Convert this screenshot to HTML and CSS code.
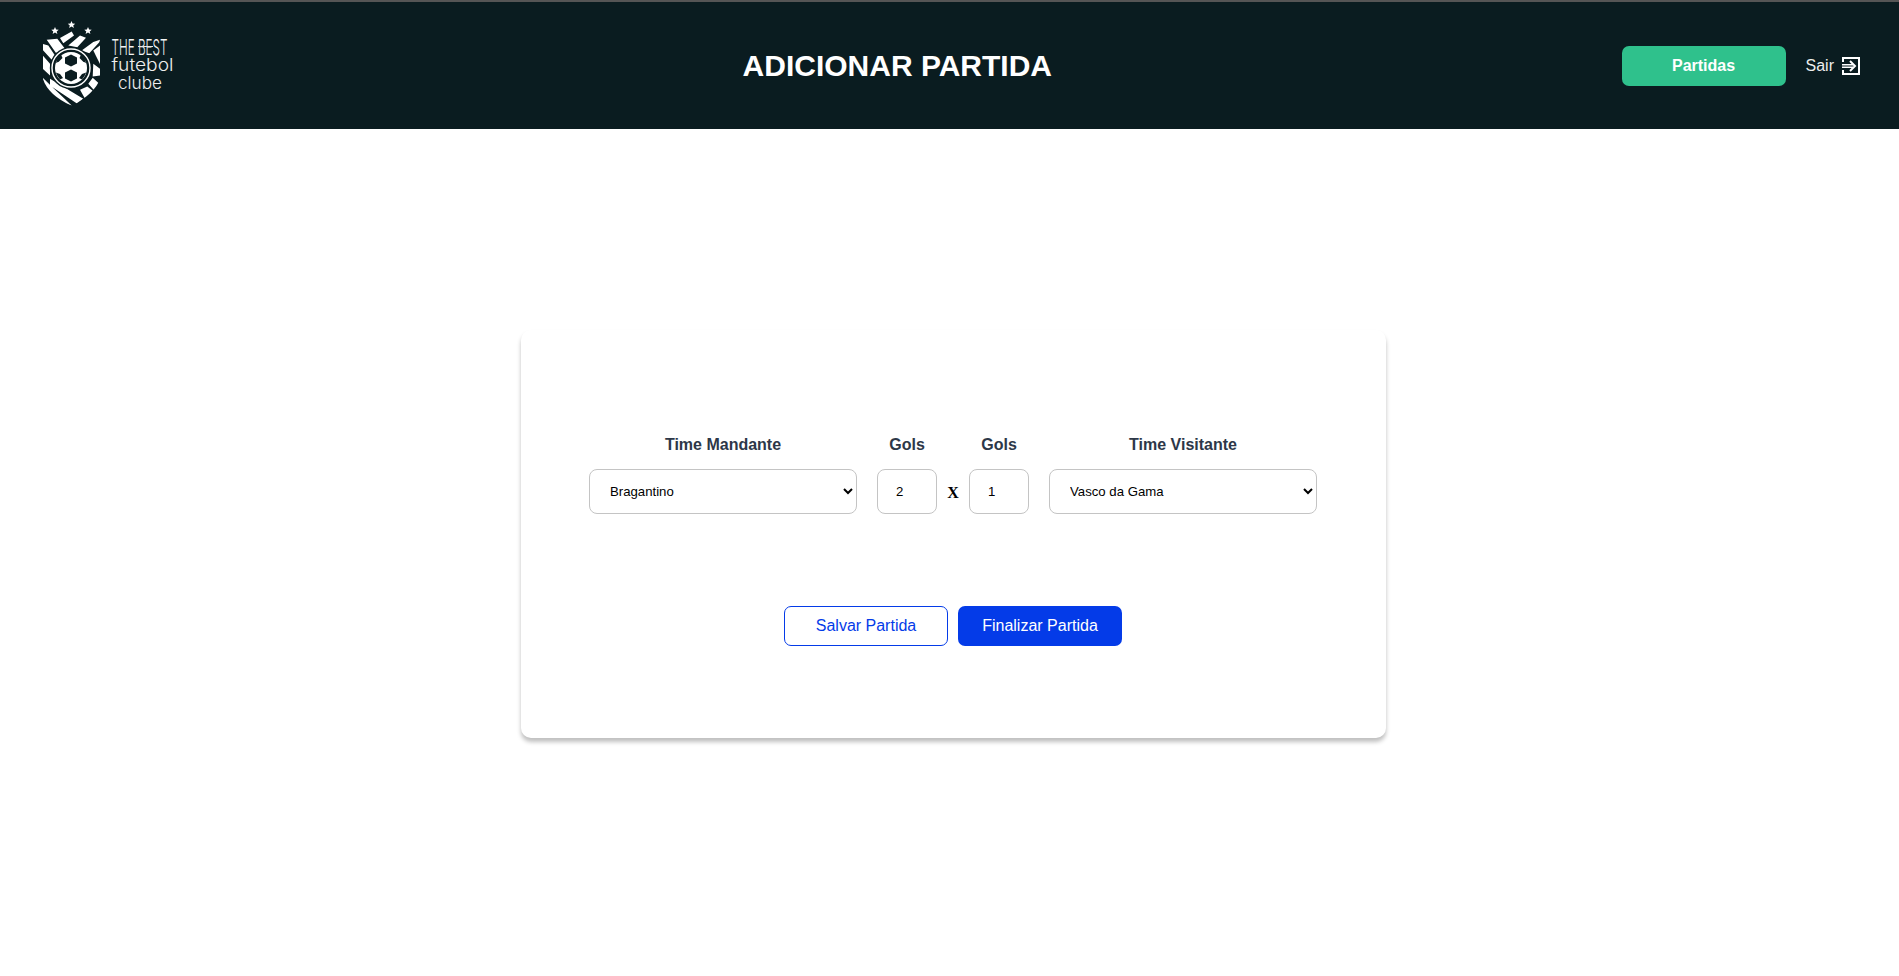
FILE: index.html
```html
<!DOCTYPE html>
<html lang="pt-BR">
<head>
<meta charset="utf-8">
<title>Adicionar Partida</title>
<link rel="stylesheet" href="styles.css">
</head>
<body>
<header class="topbar">
  <svg class="logo" viewBox="0 0 140 90" width="140" height="90" aria-label="The Best futebol clube">
    <defs>
      <clipPath id="shield"><path d="M0 16 L28 8 L57 16 L57 56 Q52 70 29 83 Q5 72 0 56 Z"/></clipPath>
    </defs>
    <g fill="#fff">
      <path d="M12 4l1.1 2.4 2.6.3-2 1.7.7 2.6-2.4-1.4-2.4 1.4.7-2.6-2-1.7 2.6-.3z"/>
      <path d="M28.5-2l1.1 2.4 2.6.3-2 1.7.7 2.6-2.4-1.4-2.4 1.4.7-2.6-2-1.7 2.6-.3z"/>
      <path d="M45 4l1.1 2.4 2.6.3-2 1.7.7 2.6-2.4-1.4-2.4 1.4.7-2.6-2-1.7 2.6-.3z"/>
      <path d="M17 15 L28.7 8.5 L31 12.5 L20.3 20.2 Z M25.3 22.5 L37 12.5 L43 14.8 L34.3 24.2 Z M38.7 27.5 L50.3 19 L57 16.8 L56.3 19.2 L46.3 30.2 Z"/>
      <g clip-path="url(#shield)">
        <path d="M50.3 27.5 L57 22.5 L57 41 Z"/>
        <path d="M3.7 16.8 L14.3 15.8 L22 25.8 L13 30 Z M-0.3 20.8 L5.3 22.5 L12 32.5 L8.7 36.8 L-0.3 27 Z M-0.3 32.5 L7 40.8 L7 52.5 L-0.3 45.8 Z"/>
        <path d="M-0.3 54.8 L8.7 63.5 L28.7 82.5 L20.3 80 L0 68 Z M7 55.8 L40.3 75.8 L34.3 80.8 L7 62.5 Z"/>
        <path d="M37 66.8 L44.3 63.5 L50.3 68.2 L42 75.8 Z M45.3 60.8 L49.7 54.8 L56.3 60.8 L51.3 67.5 Z M50.3 40.8 L57 45.8 L57 52.5 L49.7 53.5 Z"/>
      </g>
    </g>
    <circle cx="28" cy="45" r="21.2" fill="#0a1c20"/>
    <circle cx="28" cy="45" r="19" fill="none" stroke="#fff" stroke-width="1.4"/>
    <circle cx="28" cy="45" r="16" fill="#fff"/>
    <g fill="#0a1c20">
      <path d="M28 31.5 L34 34.5 L34 40.5 L28 43.5 L22 40.5 L22 34.5 Z"/>
      <path d="M28 46.5 L34 49.5 L34 55.5 L28 58.5 L22 55.5 L22 49.5 Z"/>
      <path d="M13 40 Q14 34 18 31.5 L19.5 35 L16 38.5 Z"/>
      <path d="M43 40 Q42 34 38 31.5 L36.5 35 L40 38.5 Z"/>
      <path d="M17 56.5 Q14 53 12.8 49.5 L17 51 L20 55 Z"/>
      <path d="M39 56.5 Q42 53 43.2 49.5 L39 51 L36 55 Z"/>
    </g>
    <text class="logo-best" x="68.5" y="31.5" textLength="56" lengthAdjust="spacingAndGlyphs">THE BEST</text>
    <path class="logo-rule" d="M95 23.5 H110"/>
    <text class="logo-word" x="68.5" y="48" textLength="62" lengthAdjust="spacingAndGlyphs">futebol</text>
    <text class="logo-word" x="75" y="66" textLength="44" lengthAdjust="spacingAndGlyphs">clube</text>
  </svg>
  <h1 class="title">ADICIONAR PARTIDA</h1>
  <nav class="actions">
    <a class="btn btn-green" href="#">Partidas</a>
    <a class="logout" href="#">Sair
      <svg class="logout-icon" viewBox="0 0 18 18" width="18" height="18">
        <path d="M1 5 V1 H17 V17 H1 V13" fill="none" stroke="#fff" stroke-width="2"/>
        <path d="M0 7.7 H11 M0 10.3 H11" fill="none" stroke="#fff" stroke-width="1.6"/>
        <path d="M8 4 L13 9 L8 14" fill="none" stroke="#fff" stroke-width="2"/>
      </svg>
    </a>
  </nav>
</header>
<main class="content">
  <form class="card">
    <div class="score-row">
      <label class="field">
        <span class="field-label">Time Mandante</span>
        <select class="control team"><option>Bragantino</option><option>Vasco da Gama</option></select>
      </label>
      <label class="field">
        <span class="field-label">Gols</span>
        <input class="control goals" type="number" value="2">
      </label>
      <span class="versus">X</span>
      <label class="field">
        <span class="field-label">Gols</span>
        <input class="control goals" type="number" value="1">
      </label>
      <label class="field">
        <span class="field-label">Time Visitante</span>
        <select class="control team"><option>Vasco da Gama</option><option>Bragantino</option></select>
      </label>
    </div>
    <div class="form-actions">
      <button class="btn btn-outline" type="button">Salvar Partida</button>
      <button class="btn btn-blue" type="button">Finalizar Partida</button>
    </div>
  </form>
</main>
</body>
</html>
```
FILE: styles.css
```css
* { box-sizing: border-box; }
html, body { margin: 0; height: 100%; }
body { background: #fff; font-family: "Liberation Sans", Arial, sans-serif; overflow: hidden; }

.topbar {
  height: 129px;
  background: #0a1c20;
  border-top: 2px solid #555;
  display: flex;
  align-items: center;
  justify-content: space-between;
  padding: 0 39px 0 43px;
  color: #fff;
}
.logo { overflow: visible; margin-top: 4px; }
.logo-best { font-family: Inter, sans-serif; font-size: 22px; font-weight: 300; fill: #f4f4f4; }
.logo-rule { stroke: #e8e8e8; stroke-width: 1; fill: none; }
.logo-word { font-family: Inter, sans-serif; font-size: 17px; font-weight: 300; fill: #eeeeee; }
.title { margin: 0 10px 0 0; font-size: 30px; font-weight: 700; line-height: 1; }
.actions { display: flex; align-items: center; gap: 20px; }
.btn {
  width: 164px;
  height: 40px;
  border-radius: 7px;
  border: 1px solid transparent;
  font: 16px "Liberation Sans", Arial, sans-serif;
  display: flex;
  align-items: center;
  justify-content: center;
  text-decoration: none;
  cursor: pointer;
}
.btn-green { background: #2fc18c; color: #fff; font-weight: 700; }
.btn-outline { background: #fff; color: #043be8; border-color: #043be8; }
.btn-blue { background: #043be8; color: #fff; }
.logout { display: flex; align-items: center; gap: 8px; color: #eee; font-size: 16px; text-decoration: none; }
.logout-icon { display: block; }

.content { padding: 201px 0 0 521px; }
.card {
  width: 865px;
  height: 408px;
  border-radius: 10px;
  background: #fff;
  box-shadow: 0 4px 4px rgba(0, 0, 0, 0.25);
  padding: 103px 0 0 68px;
}
.score-row { display: flex; align-items: flex-end; gap: 20px; }
.field { display: flex; flex-direction: column; align-items: center; gap: 12px; }
.field-label { font-size: 16px; line-height: 24px; font-weight: 700; color: #2d3748; }
.control {
  height: 45px;
  border: 1px solid #c4c4c4;
  border-radius: 8px;
  background: #fff;
  color: #000;
  font: 13.2px "Liberation Sans", Arial, sans-serif;
  padding: 0 0 0 16px;
}
.team { width: 268px; }
.goals { width: 60px; appearance: textfield; padding-left: 18px; }
.versus { font: 700 16px "Liberation Serif", serif; color: #000; width: 12px; margin: 0 -10px; height: 45px; line-height: 47px; text-align: center; }
.form-actions { display: flex; gap: 10px; margin: 92px 0 0 195px; }
```
